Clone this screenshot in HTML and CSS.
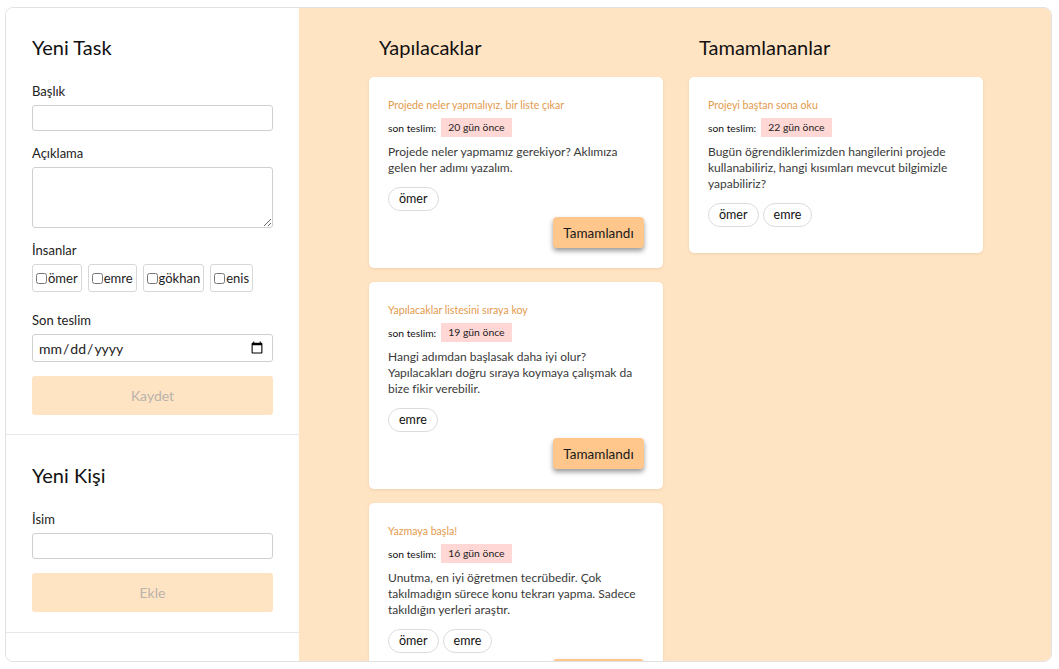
FILE: index.html
```html
<!DOCTYPE html>
<html lang="tr">
<head>
<meta charset="utf-8">
<title>Task</title>
<link rel="stylesheet" href="styles.css">
</head>
<body>
<div class="app">
  <aside class="sidebar">
    <section class="section">
      <h2 class="heading">Yeni Task</h2>
      <div class="field">
        <label class="label">Başlık</label>
        <input class="input" type="text">
      </div>
      <div class="field">
        <label class="label">Açıklama</label>
        <textarea class="textarea"></textarea>
      </div>
      <div class="field field-people">
        <label class="label">İnsanlar</label>
        <div class="people">
          <label class="person"><input type="checkbox" class="check">ömer</label>
          <label class="person"><input type="checkbox" class="check">emre</label>
          <label class="person"><input type="checkbox" class="check">gökhan</label>
          <label class="person"><input type="checkbox" class="check">enis</label>
        </div>
      </div>
      <div class="field">
        <label class="label">Son teslim</label>
        <input class="input input-date" type="date">
      </div>
      <button class="submit" disabled>Kaydet</button>
    </section>
    <section class="section section-person">
      <h2 class="heading">Yeni Kişi</h2>
      <div class="field">
        <label class="label">İsim</label>
        <input class="input" type="text">
      </div>
      <button class="submit" disabled>Ekle</button>
    </section>
  </aside>
  <main class="board">
    <div class="column">
      <h2 class="heading col-heading">Yapılacaklar</h2>
      <div class="card">
        <div class="card-title">Projede neler yapmalıyız, bir liste çıkar</div>
        <div class="due"><span>son teslim:</span><span class="badge">20 gün önce</span></div>
        <p class="desc">Projede neler yapmamız gerekiyor? Aklımıza gelen her adımı yazalım.</p>
        <div class="pills"><span class="pill">ömer</span></div>
        <div class="actions"><button class="done">Tamamlandı</button></div>
      </div>
      <div class="card">
        <div class="card-title">Yapılacaklar listesini sıraya koy</div>
        <div class="due"><span>son teslim:</span><span class="badge">19 gün önce</span></div>
        <p class="desc">Hangi adımdan başlasak daha iyi olur? Yapılacakları doğru sıraya koymaya çalışmak da bize fikir verebilir.</p>
        <div class="pills"><span class="pill">emre</span></div>
        <div class="actions"><button class="done">Tamamlandı</button></div>
      </div>
      <div class="card">
        <div class="card-title">Yazmaya başla!</div>
        <div class="due"><span>son teslim:</span><span class="badge">16 gün önce</span></div>
        <p class="desc">Unutma, en iyi öğretmen tecrübedir. Çok takılmadığın sürece konu tekrarı yapma. Sadece takıldığın yerleri araştır.</p>
        <div class="pills"><span class="pill">ömer</span><span class="pill">emre</span></div>
        <div class="actions"><button class="done">Tamamlandı</button></div>
      </div>
    </div>
    <div class="column">
      <h2 class="heading col-heading">Tamamlananlar</h2>
      <div class="card">
        <div class="card-title">Projeyi baştan sona oku</div>
        <div class="due"><span>son teslim:</span><span class="badge">22 gün önce</span></div>
        <p class="desc">Bugün öğrendiklerimizden hangilerini projede kullanabiliriz, hangi kısımları mevcut bilgimizle yapabiliriz?</p>
        <div class="pills"><span class="pill">ömer</span><span class="pill">emre</span></div>
      </div>
    </div>
  </main>
</div>
</body>
</html>
```
FILE: styles.css
```css
* { box-sizing: border-box; }

html, body { margin: 0; background: #ffffff; }

body {
  padding: 7px 7px 7px 5px;
  font-family: Lato, Inter, "Noto Sans", sans-serif;
  color: #111;
}

.app {
  display: flex;
  height: 655px;
  border: 1px solid #e2e2e2;
  border-radius: 8px;
  overflow: hidden;
}

.sidebar {
  width: 293px;
  flex: none;
  background: #fff;
  display: flex;
  flex-direction: column;
}

.section {
  padding: 27px 26px 19px;
  border-bottom: 1px solid #e8e8e8;
}

.section-person { padding: 28px 26px 20px; }

.heading {
  margin: 0 0 24px;
  font-size: 20px;
  line-height: 24px;
  font-weight: 400;
  color: #111;
}

.field { margin-bottom: 14px; }
.field-people { margin-bottom: 20px; }

.label {
  display: block;
  font-size: 13px;
  line-height: 16px;
  margin-bottom: 6px;
  color: #222;
}

.input, .textarea {
  display: block;
  width: 100%;
  border: 1px solid #cfcfcf;
  border-radius: 3px;
  background: #fff;
  font-family: inherit;
  font-size: 13px;
  margin: 0;
}

.input { height: 26px; padding: 0 6px; }
.input-date { height: 28px; padding: 0 6px 0 5px; color: #222; font-size: 14px; }

.textarea { height: 61px; resize: vertical; padding: 4px 6px; }

.people { display: flex; gap: 6px; }

.person {
  display: inline-flex;
  align-items: center;
  height: 28px;
  padding: 0 3px;
  border: 1px solid #d8d8d8;
  border-radius: 3px;
  font-size: 13px;
  color: #222;
}

.check {
  width: 11px;
  height: 11px;
  margin: 0 1px 0 0;
}

.submit {
  display: block;
  width: 100%;
  height: 39px;
  border: none;
  border-radius: 3px;
  background: #ffe4c4;
  color: #b9b2aa;
  font-family: inherit;
  font-size: 14px;
}

.board {
  flex: 1;
  background: #ffe4c4;
  display: flex;
  justify-content: center;
  align-items: flex-start;
  gap: 26px;
  padding: 27px 0 0 2px;
  overflow: hidden;
}

.column { width: 294px; }

.col-heading { margin: 0 0 18px; padding-left: 10px; }

.card {
  background: #fff;
  border-radius: 5px;
  padding: 22px 19px 20px;
  margin-bottom: 14px;
  box-shadow: 0 1px 3px rgba(160, 120, 80, 0.18);
}

.card-title {
  font-size: 10.6px;
  line-height: 13px;
  color: #e39a4c;
}

.due {
  display: flex;
  align-items: center;
  gap: 5px;
  margin-top: 6px;
  font-size: 10.3px;
  color: #111;
}

.badge {
  display: inline-block;
  height: 19px;
  line-height: 19px;
  padding: 0 7px;
  background: #ffd7d5;
  font-size: 10.4px;
  color: #222;
}

.desc {
  margin: 7px 0 0;
  font-size: 12px;
  line-height: 16px;
  color: #3a3a3a;
}

.pills {
  display: flex;
  gap: 4px;
  margin-top: 11px;
  margin-bottom: 6px;
}

.pill {
  display: inline-block;
  height: 24px;
  line-height: 22px;
  padding: 0 10px;
  border: 1px solid #dcdcdc;
  border-radius: 12px;
  font-size: 12.5px;
  color: #111;
}

.actions { display: flex; justify-content: flex-end; }

.done {
  height: 31px;
  width: 91px;
  border: none;
  border-radius: 4px;
  background: #ffc78c;
  color: #1a1a1a;
  font-family: inherit;
  font-size: 13.5px;
  box-shadow: 0 3px 5px rgba(0, 0, 0, 0.4);
}
```
